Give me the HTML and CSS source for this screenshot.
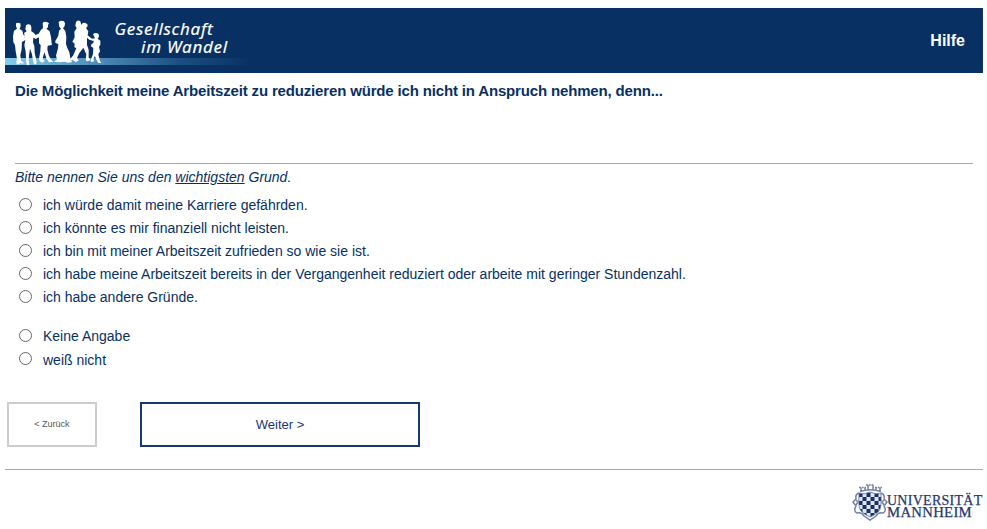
FILE: index.html
```html
<!DOCTYPE html>
<html lang="de">
<head>
<meta charset="utf-8">
<title>Gesellschaft im Wandel</title>
<link rel="stylesheet" href="styles.css">
</head>
<body>
<header class="header">
  <svg class="brand" width="250" height="65" viewBox="0 0 250 65" role="img" aria-label="Gesellschaft im Wandel">
    <defs>
      <linearGradient id="stripe"><stop offset="0" stop-color="#83cdee"/><stop offset=".38" stop-color="#4d8bb8"/><stop offset=".7" stop-color="#1e4f82"/><stop offset="1" stop-color="#083062"/></linearGradient>
    </defs>
    <rect y="50" width="248" height="7" fill="url(#stripe)"/>
    <g transform="translate(0 4) scale(.33333)" fill="#fff">
      <path d="M33 34Q39 30 46 34L47 42 44 51 52 56 55 68 61 73 56 82 51 84 50 111 46 130 48 146 56 152 55 155 46 153 42 157 35 157 34 149 36 140 32 118 30 99 25 91 24 73 27 56 36 50 33 43Z"/>
      <path d="M63 40Q69 34 77 39L79 46 79 58 87 63 94 73 101 67 104 72 93 81 85 77 84 91 88 102 89 122 95 151 93 157 87 157 84 147 81 127 75 110 72 130 71 147 73 158 66 160 64 151 62 119 58 100 61 84 51 90 49 85 60 76 57 63 65 58 61 52Z"/>
      <path d="M113 33Q118 27 127 31L132 34 129 39 129 46 124 50 134 58 138 76 140 94 141 99 128 101 127 112 131 129 137 142 145 149 132 151 125 141 118 121 113 139 119 148 111 152 104 147 102 140 106 118 107 99 102 94 102 77 91 75 91 69 101 65 108 53 114 49Z"/>
      <path d="M161 30Q168 23 177 28L180 34 179 42 174 49 181 57 184 74 183 96 187 108 193 121 197 143 202 150 190 152 178 149 165 151 147 149 156 142 153 131 159 109 160 97 151 92 151 87 160 71 162 56 168 50 163 44Z"/>
      <path d="M213 30Q218 22 226 28L229 40 230 46Q227 36 234 33Q242 31 247 37L248 43 243 48 250 58 248 70 259 79 267 82 264 86 253 83 246 77 246 99 251 113 251 137 257 144 247 148 242 145 244 127 235 107 223 123 216 138 221 146 212 150 202 143 193 146 198 138 204 131 214 109 208 105 209 95 202 89 209 76 208 59 215 49 211 41Z"/>
      <path d="M264 67Q270 60 281 66L282 74 278 80 286 86 286 99 282 104 285 118 280 127 285 148 290 152 280 153 274 143 270 132 265 142 268 148 258 150 257 145 264 126 265 108 258 103 259 97 265 93 266 86 260 84 263 80 270 79Z"/>
    </g>
    <g class="brand-text">
      <text x="109.500" y="27" textLength="99" lengthAdjust="spacingAndGlyphs">Gesellschaft</text>
      <text x="136" y="44.500" textLength="87" lengthAdjust="spacingAndGlyphs">im Wandel</text>
    </g>
  </svg>
  <a class="help">Hilfe</a>
</header>
<main>
  <h1 class="question">Die Möglichkeit meine Arbeitszeit zu reduzieren würde ich nicht in Anspruch nehmen, denn...</h1>
  <p class="hint">Bitte nennen Sie uns den <u>wichtigsten</u> Grund.</p>
  <div class="options">
    <label><input type="radio" name="reason"><span>ich würde damit meine Karriere gefährden.</span></label>
    <label><input type="radio" name="reason"><span>ich könnte es mir finanziell nicht leisten.</span></label>
    <label><input type="radio" name="reason"><span>ich bin mit meiner Arbeitszeit zufrieden so wie sie ist.</span></label>
    <label><input type="radio" name="reason"><span>ich habe meine Arbeitszeit bereits in der Vergangenheit reduziert oder arbeite mit geringer Stundenzahl.</span></label>
    <label><input type="radio" name="reason"><span>ich habe andere Gründe.</span></label>
    <label class="separate"><input type="radio" name="reason"><span>Keine Angabe</span></label>
    <label class="last"><input type="radio" name="reason"><span>weiß nicht</span></label>
  </div>
</main>
<nav class="buttons">
  <button class="back">&lt; Zurück</button>
  <button class="next">Weiter &gt;</button>
</nav>
<footer class="footer">
  <svg width="131" height="40" viewBox="0 0 131 40" role="img" aria-label="Universität Mannheim">
    <defs>
      <pattern id="checks" x="6.500" y="10" width="8" height="8" patternUnits="userSpaceOnUse"><rect width="8" height="8" fill="#dfe4ed"/><path d="M0 0h4v8h4V4H0Z" fill="#1d2f65"/></pattern>
    </defs>
    <path d="M7 10Q12 12 18 9Q24 12 29 10C29 18 30 23 27 28Q23 32 18 34Q13 32 9 28C6 23 7 18 7 10Z" fill="url(#checks)" stroke="#5d6d98" stroke-width=".8"/>
    <g fill="none" stroke="#7482a8" stroke-width="1.500">
      <path d="M7 10Q3 11 4 16L1 19 4 23Q1 28 5 30Q10 29 12 33L18 37 24 33Q26 29 31 30Q35 28 32 23L35 19 32 16Q33 11 29 10"/>
      <path d="M4 17l2 2-2 3M32 17l-2 2 2 3"/>
      <path d="M9 9V5M13 8V5M16 7V2M21 7V2M24 8V5M28 9V5M8 8.500Q18 5 29 8.500"/>
      <path d="M7 4.500h7M14 2h8M23 4.500h7" stroke-dasharray="2 .7"/>
    </g>
    <g class="university-text">
      <text x="35" y="21.500" textLength="95.500" lengthAdjust="spacingAndGlyphs">UNIVERSITÄT</text>
      <text x="35" y="33.500" textLength="85" lengthAdjust="spacingAndGlyphs">MANNHEIM</text>
    </g>
  </svg>
</footer>
</body>
</html>
```

FILE: styles.css
```css
* { box-sizing: border-box; }
body {
  margin: 8px 4px 0 5px;
  background: #fff;
  color: #083062;
  font: 14px/18px "Liberation Sans", Arial, sans-serif;
}
.header {
  display: flex;
  justify-content: space-between;
  height: 65px;
  padding-right: 18px;
  background: #083062;
}
.brand { display: block; }
.brand-text { fill: #fff; font: italic 400 16px "Noto Sans", sans-serif; letter-spacing: .7px; stroke: #fff; stroke-width: .15px; }
.help { color: #fff; font-size: 16px; font-weight: bold; line-height: 65px; }
main { padding: 0 10px; }
.question {
  height: 91px;
  margin: 0;
  padding-top: 9px;
  border-bottom: 1px solid #aaa;
  font-size: 15px;
  line-height: 18px;
  letter-spacing: -.16px;
  white-space: nowrap;
}
.hint { margin: 4px 0 6px; font-style: italic; line-height: 19px; }
.options label { display: flex; height: 23px; align-items: center; white-space: nowrap; }
.options input {
  appearance: none;
  width: 13px;
  height: 13px;
  margin: 0 11px 1px 4px;
  border: 1px solid #666;
  border-radius: 50%;
  background: #fff;
}
.options .separate { margin-top: 16px; }
.options .last span { padding-top: 2px; }
.buttons { display: flex; gap: 43px; margin: 32px 0 22px 2px; }
.buttons button { height: 45px; padding: 0 0 1px; background: #fff; font-family: inherit; }
.buttons .back { width: 90px; padding-bottom: 2px; border: 2px solid #ccc; color: #555; font-size: 9px; }
.next { width: 280px; border: 2px solid #173872; color: #173872; font-size: 13px; }
.footer { display: flex; justify-content: flex-end; padding-top: 13px; border-top: 1px solid #aaa; }
.university-text { fill: #26376b; font: 14.5px "Liberation Serif", serif; letter-spacing: .3px; stroke: #26376b; stroke-width: .25px; }
```
